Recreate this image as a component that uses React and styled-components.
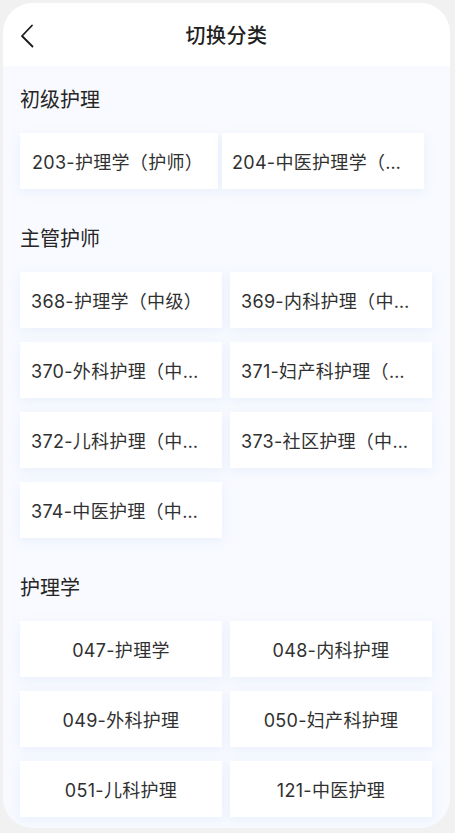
import React from "react";
import styled, { createGlobalStyle } from "styled-components";

const Global = createGlobalStyle`
  html, body { margin: 0; padding: 0; background: #f1f1f1; }
  body { font-family: Inter, "Noto Sans CJK SC", sans-serif; color: #333; }
  * { box-sizing: border-box; }
`;

const Frame = styled.div`
  margin: 3px;
  width: 447px;
  height: 825px;
  border-radius: 30px;
  overflow: hidden;
  background: #f8faff;
  display: flex;
  flex-direction: column;
`;

const Header = styled.div`
  height: 63px;
  background: #fff;
  display: flex;
  align-items: center;
  justify-content: center;
  position: relative;
  flex-shrink: 0;
`;

const Back = styled.button`
  position: absolute;
  left: 12px;
  top: 20px;
  width: 24px;
  height: 26px;
  padding: 0;
  border: 0;
  background: none;
  display: flex;
  align-items: center;
  justify-content: center;
`;

const Title = styled.h1`
  margin: 0;
  font-size: 20px;
  font-weight: 500;
  color: #1f1f1f;
  letter-spacing: 0.5px;
`;

const Content = styled.div`
  padding: 20px 18px 0 17px;
  display: flex;
  flex-direction: column;
  gap: 36px;
`;

const Section = styled.section`
  display: flex;
  flex-direction: column;
  gap: 19px;
`;

const Heading = styled.h2`
  margin: 0;
  font-size: 20px;
  line-height: 28px;
  font-weight: 400;
  color: #262626;
`;

const Grid = styled.div`
  display: grid;
  grid-template-columns: ${(p) => p.$cols || "202px 202px"};
  column-gap: ${(p) => p.$gap || 8}px;
  row-gap: 14px;
`;

const Card = styled.div`
  height: 56px;
  background: #fff;
  box-shadow: 0 3px 10px rgba(190, 210, 240, 0.25);
  display: flex;
  align-items: center;
  justify-content: ${(p) => (p.$center ? "center" : "flex-start")};
  padding: ${(p) => p.$pad || "0 12px"};
  font-size: 18px;
  letter-spacing: 0.3px;
  color: #303030;
  min-width: 0;
`;

const Label = styled.span`
  white-space: nowrap;
  overflow: hidden;
  text-overflow: ellipsis;
  min-width: 0;
`;

const Chevron = () => (
  <svg width="14" height="24" viewBox="0 0 14 24" fill="none">
    <path d="M12 1.5 L2 12 L12.5 22.5" stroke="#1a1a1a" strokeWidth="1.8" strokeLinecap="round" strokeLinejoin="round" />
  </svg>
);

const junior = ["203-护理学（护师）", "204-中医护理学（护师）"];
const senior = [
  "368-护理学（中级）",
  "369-内科护理（中级）",
  "370-外科护理（中级）",
  "371-妇产科护理（中级）",
  "372-儿科护理（中级）",
  "373-社区护理（中级）",
  "374-中医护理（中级）",
];
const nursing = [
  "047-护理学",
  "048-内科护理",
  "049-外科护理",
  "050-妇产科护理",
  "051-儿科护理",
  "121-中医护理",
];

export default function App() {
  return (
    <>
      <Global />
      <Frame>
        <Header>
          <Back aria-label="返回">
            <Chevron />
          </Back>
          <Title>切换分类</Title>
        </Header>
        <Content>
          <Section>
            <Heading>初级护理</Heading>
            <Grid $cols="198px 202px" $gap={4}>
              <Card $pad="0 12px">
                <Label>{junior[0]}</Label>
              </Card>
              <Card $pad="0 14px 0 10px">
                <Label>{junior[1]}</Label>
              </Card>
            </Grid>
          </Section>
          <Section>
            <Heading>主管护师</Heading>
            <Grid>
              {senior.map((t) => (
                <Card key={t} $pad="0 12px 0 11px">
                  <Label>{t}</Label>
                </Card>
              ))}
            </Grid>
          </Section>
          <Section>
            <Heading>护理学</Heading>
            <Grid>
              {nursing.map((t) => (
                <Card key={t} $center>
                  <Label>{t}</Label>
                </Card>
              ))}
            </Grid>
          </Section>
        </Content>
      </Frame>
    </>
  );
}
